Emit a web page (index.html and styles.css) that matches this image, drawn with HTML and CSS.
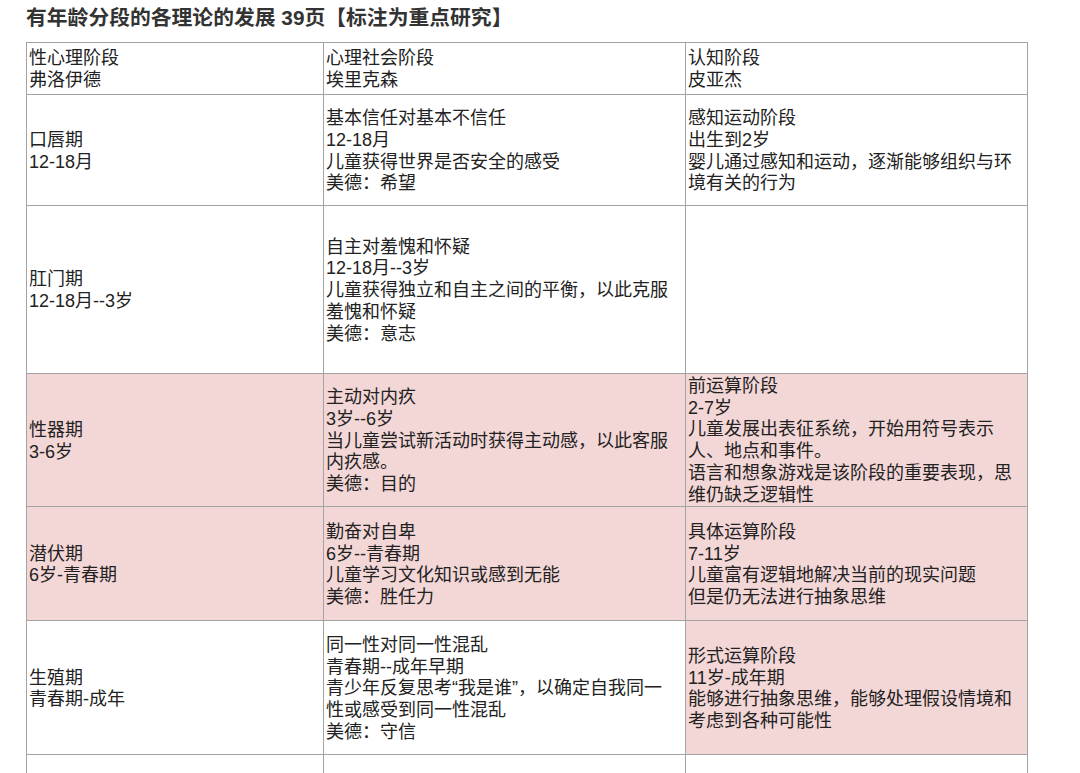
FILE: index.html
```html
<!DOCTYPE html>
<html lang="zh-CN">
<head>
<meta charset="utf-8">
<title>有年龄分段的各理论的发展</title>
<link rel="stylesheet" href="styles.css">
</head>
<body>
<div class="page">
  <h1 class="title">有年龄分段的各理论的发展 39页【标注为重点研究】</h1>
  <table class="stages">
    <colgroup>
      <col class="c1"><col class="c2"><col class="c3">
    </colgroup>
    <tr class="r-head">
      <td>性心理阶段<br>弗洛伊德</td>
      <td>心理社会阶段<br>埃里克森</td>
      <td>认知阶段<br>皮亚杰</td>
    </tr>
    <tr class="r1">
      <td>口唇期<br>12-18月</td>
      <td>基本信任对基本不信任<br>12-18月<br>儿童获得世界是否安全的感受<br>美德：希望</td>
      <td>感知运动阶段<br>出生到2岁<br>婴儿通过感知和运动，逐渐能够组织与环<br>境有关的行为</td>
    </tr>
    <tr class="r2">
      <td>肛门期<br>12-18月--3岁</td>
      <td>自主对羞愧和怀疑<br>12-18月--3岁<br>儿童获得独立和自主之间的平衡，以此克服<br>羞愧和怀疑<br>美德：意志</td>
      <td></td>
    </tr>
    <tr class="r3 pink">
      <td>性器期<br>3-6岁</td>
      <td>主动对内疚<br>3岁--6岁<br>当儿童尝试新活动时获得主动感，以此客服<br>内疚感。<br>美德：目的</td>
      <td class="tight">前运算阶段<br>2-7岁<br>儿童发展出表征系统，开始用符号表示<br>人、地点和事件。<br>语言和想象游戏是该阶段的重要表现，思<br>维仍缺乏逻辑性</td>
    </tr>
    <tr class="r4 pink">
      <td>潜伏期<br>6岁-青春期</td>
      <td>勤奋对自卑<br>6岁--青春期<br>儿童学习文化知识或感到无能<br>美德：胜任力</td>
      <td>具体运算阶段<br>7-11岁<br>儿童富有逻辑地解决当前的现实问题<br>但是仍无法进行抽象思维</td>
    </tr>
    <tr class="r5">
      <td>生殖期<br>青春期-成年</td>
      <td>同一性对同一性混乱<br>青春期--成年早期<br>青少年反复思考“我是谁”，以确定自我同一<br>性或感受到同一性混乱<br>美德：守信</td>
      <td class="pink-cell">形式运算阶段<br>11岁-成年期<br>能够进行抽象思维，能够处理假设情境和<br>考虑到各种可能性</td>
    </tr>
    <tr class="r6">
      <td></td><td></td><td></td>
    </tr>
  </table>
</div>
</body>
</html>
```
FILE: styles.css
```css
html, body {
  margin: 0;
  padding: 0;
  background: #ffffff;
}

.page {
  padding: 6px 0 0 26px;
  font-family: "Liberation Sans", "Noto Sans CJK SC", sans-serif;
  color: #222222;
}

.title {
  margin: 0 0 12px 0;
  font-size: 20.8px;
  line-height: 24px;
  font-weight: bold;
  color: #333333;
  white-space: nowrap;
}

.stages {
  border-collapse: collapse;
  table-layout: fixed;
  width: 1002px;
  font-size: 18px;
  line-height: 21.7px;
}

.stages col.c1 { width: 297px; }
.stages col.c2 { width: 362px; }
.stages col.c3 { width: 342px; }

.stages td {
  border: 1px solid #a3a3a3;
  padding: 3px 2px 0 2px;
  vertical-align: middle;
  white-space: nowrap;
}

.stages td.tight {
  padding-top: 2px;
}

.r-head { height: 52px; }
.r1 { height: 111px; }
.r2 { height: 168px; }
.r3 { height: 133px; }
.r4 { height: 114px; }
.r5 { height: 134px; }
.r6 { height: 19px; }

.pink td,
.pink-cell {
  background: #f3d6d6;
}
```
